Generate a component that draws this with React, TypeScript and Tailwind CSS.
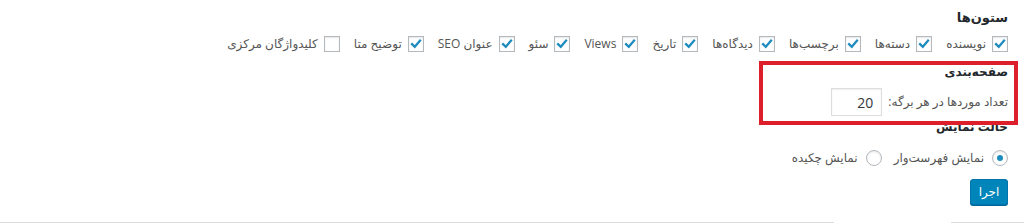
import React from "react";

const font = { fontFamily: '"Open Sans", "DejaVu Sans", sans-serif' };

function Check({ checked }: { checked: boolean }) {
  return (
    <span className="inline-flex h-4 w-4 shrink-0 items-center justify-center border border-[#b4b9be] bg-white shadow-[inset_0_1px_2px_rgba(0,0,0,0.1)]">
      {checked && (
        <svg viewBox="0 0 16 16" className="h-4 w-4">
          <path d="M3.5 8.2 L6.6 11.2 L12.6 4.2" fill="none" stroke="#1e8cbe" strokeWidth="2.6" strokeLinecap="square" />
        </svg>
      )}
    </span>
  );
}

function Radio({ checked }: { checked: boolean }) {
  return (
    <span className="inline-flex h-4 w-4 shrink-0 items-center justify-center rounded-full border border-[#b4b9be] bg-white shadow-[inset_0_1px_2px_rgba(0,0,0,0.1)]">
      {checked && <span className="h-[6px] w-[6px] rounded-full bg-[#1e8cbe]" />}
    </span>
  );
}

const cols: [string, boolean][] = [
  ["نویسنده", true],
  ["دسته‌ها", true],
  ["برچسب‌ها", true],
  ["دیدگاه‌ها", true],
  ["تاریخ", true],
  ["Views", true],
  ["سئو", true],
  ["عنوان SEO", true],
  ["توضیح متا", true],
  ["کلیدواژگان مرکزی", false],
];

export default function App() {
  return (
    <div dir="rtl" style={font} className="relative h-[224px] w-[1024px] overflow-hidden bg-white text-[12px] text-[#555]">
      <div className="flex flex-col pr-[16px] pt-[8px]">
        <h5 className="h-[18px] text-[13px] font-semibold leading-[18px] text-[#23282d]">ستون‌ها</h5>
        <div className="mt-[8px] flex h-[20px] items-center gap-x-[14px]">
          {cols.map(([l, c]) => (
            <label key={l} className="flex items-center gap-[6px] whitespace-nowrap">
              <Check checked={c} />
              <span>{l}</span>
            </label>
          ))}
        </div>
        <h5 className="mt-[10px] h-[16px] text-[12px] font-semibold leading-[16px] text-[#23282d]">صفحه‌بندی</h5>
        <div className="mt-[8px] flex h-[28px] items-center gap-[6px]">
          <span>تعداد موردها در هر برگه:</span>
          <span className="flex h-[28px] w-[51px] items-center justify-end border border-[#ddd] text-[14px] text-[#32373c] shadow-[inset_0_1px_2px_rgba(0,0,0,0.07)]" dir="ltr">
            <span className="pr-[8px]">20</span>
          </span>
        </div>
        <h5 className="mt-[3px] h-[16px] text-[12px] font-semibold leading-[16px] text-[#23282d]">حالت نمایش</h5>
        <div className="mt-[13px] flex h-[20px] items-center gap-x-[12px]">
          <label className="flex items-center gap-[8px]">
            <Radio checked={true} />
            <span>نمایش فهرست‌وار</span>
          </label>
          <label className="flex items-center gap-[8px]">
            <Radio checked={false} />
            <span>نمایش چکیده</span>
          </label>
        </div>
        <div className="mt-[11px] flex">
          <button className="h-[26px] w-[38px] rounded-[3px] border border-[#0073aa] bg-[#0085ba] text-[12px] text-white shadow-[0_1px_0_#006799]">
            اجرا
          </button>
        </div>
      </div>
      <div className="absolute bottom-[1px] left-0 right-0 flex h-[1px]">
        <div className="h-[1px] w-[73px] bg-[#ddd]" />
        <div className="h-[1px] w-[117px] bg-white" />
        <div className="h-[1px] flex-1 bg-[#ddd]" />
      </div>
      <div className="absolute left-[759px] top-[61px] h-[64px] w-[259px] border-[4px] border-[#dc1f2b]" />
    </div>
  );
}
